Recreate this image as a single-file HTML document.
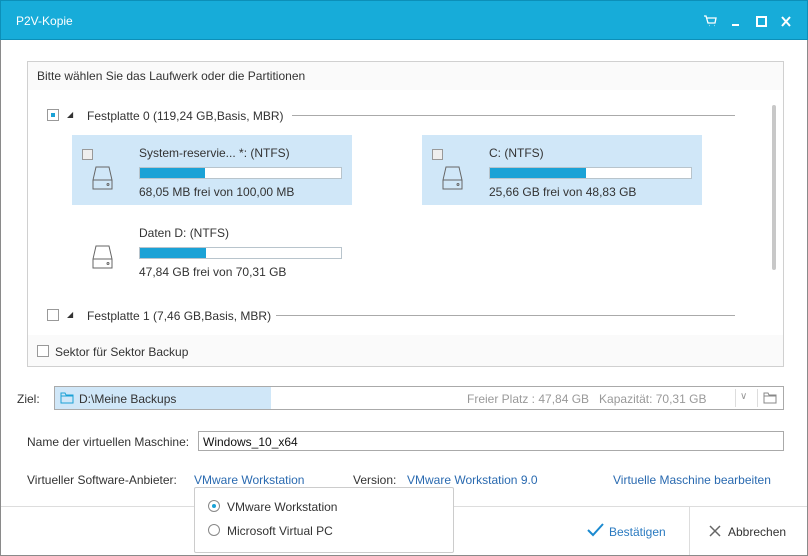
<!DOCTYPE html>
<html><head><meta charset="utf-8"><style>
*{box-sizing:border-box;margin:0;padding:0}
body{width:808px;height:556px;background:#fff;font-family:"Liberation Sans",sans-serif;font-size:12px;color:#333;position:relative;overflow:hidden;letter-spacing:0}
.a{position:absolute;white-space:nowrap}
.bar{position:absolute;height:12px;border:1px solid #b8c4cc;background:#fff}
.bar i{display:block;height:100%;background:#1ba2d6}
.card{position:absolute;background:#d0e7f8}
.cb{position:absolute;width:12px;height:12px;border:1px solid #999;background:#fff}
.lnk{color:#2a6ab0}
</style></head><body>
<div class="a" style="left:0;top:0;width:808px;height:40px;background:#17acd9;border:1px solid #0c8fb8"></div>
<div class="a" style="left:16px;top:14px;color:#fff;font-size:12px">P2V-Kopie</div>
<svg class="a" style="left:703px;top:14px" width="90" height="14"><g stroke="#fff" fill="none" stroke-width="1.3"><path d="M1 2h2l2 7h7l1-5H4M6 11.5h.5M11 11.5h.5"/></g><rect x="29" y="10" width="7" height="2" fill="#fff"/><rect x="54" y="3" width="9" height="9" fill="none" stroke="#fff" stroke-width="2"/><path d="M79 3l8 9M87 3l-8 9" stroke="#fff" stroke-width="2"/></svg>
<div class="a" style="left:0;top:40px;width:808px;height:516px;border:1px solid #8a8a8a;border-top:none"></div>
<div class="a" style="left:27px;top:61px;width:757px;height:306px;border:1px solid #d0d0d0;background:#fafafa"></div>
<div class="a" style="left:28px;top:90px;width:755px;height:245px;background:#fff"></div>
<div class="a" style="left:37px;top:69px">Bitte wählen Sie das Laufwerk oder die Partitionen</div>
<div class="a" style="left:772px;top:105px;width:4px;height:165px;background:#c8c8c8;border-radius:2px"></div>
<div class="cb" style="left:47px;top:109px"><i style="position:absolute;left:3px;top:3px;width:4px;height:4px;background:#1ba2d6"></i></div>
<div class="a" style="left:67px;top:110px;font-size:8px">◢</div>
<div class="a" style="left:87px;top:109px">Festplatte 0 (119,24 GB,Basis, MBR)</div>
<div class="a" style="left:292px;top:115px;width:443px;height:1px;background:#aaa"></div>
<div class="card" style="left:72px;top:135px;width:280px;height:70px"></div>
<div class="card" style="left:422px;top:135px;width:280px;height:70px"></div>
<div class="cb" style="left:82px;top:149px;width:11px;height:11px;background:#eee"></div>
<div class="cb" style="left:432px;top:149px;width:11px;height:11px;background:#eee"></div>
<svg class="a" style="left:91px;top:165px" width="24" height="28"><g fill="none" stroke="#666"><path d="M5 2h13l3 13v9H2v-9z M2 15h19"/><circle cx="17" cy="19.5" r="1"/></g></svg>
<svg class="a" style="left:441px;top:165px" width="24" height="28"><g fill="none" stroke="#666"><path d="M5 2h13l3 13v9H2v-9z M2 15h19"/><circle cx="17" cy="19.5" r="1"/></g></svg>
<svg class="a" style="left:91px;top:244px" width="24" height="28"><g fill="none" stroke="#666"><path d="M5 2h13l3 13v9H2v-9z M2 15h19"/><circle cx="17" cy="19.5" r="1"/></g></svg>
<div class="a" style="left:139px;top:146px">System-reservie... *: (NTFS)</div>
<div class="bar" style="left:139px;top:167px;width:203px"><i style="width:65px"></i></div>
<div class="a" style="left:139px;top:185px">68,05 MB frei von 100,00 MB</div>
<div class="a" style="left:489px;top:146px">C: (NTFS)</div>
<div class="bar" style="left:489px;top:167px;width:203px"><i style="width:96px"></i></div>
<div class="a" style="left:489px;top:185px">25,66 GB frei von 48,83 GB</div>
<div class="a" style="left:139px;top:226px">Daten D: (NTFS)</div>
<div class="bar" style="left:139px;top:247px;width:203px"><i style="width:66px"></i></div>
<div class="a" style="left:139px;top:265px">47,84 GB frei von 70,31 GB</div>
<div class="cb" style="left:47px;top:309px"></div>
<div class="a" style="left:67px;top:310px;font-size:8px">◢</div>
<div class="a" style="left:87px;top:309px">Festplatte 1 (7,46 GB,Basis, MBR)</div>
<div class="a" style="left:276px;top:315px;width:459px;height:1px;background:#aaa"></div>
<div class="cb" style="left:37px;top:345px"></div>
<div class="a" style="left:55px;top:345px">Sektor für Sektor Backup</div>
<div class="a" style="left:17px;top:392px">Ziel:</div>
<div class="a" style="left:54px;top:386px;width:730px;height:24px;border:1px solid #aaa"></div>
<div class="a" style="left:55px;top:387px;width:216px;height:22px;background:#d0e7f8"></div>
<svg class="a" style="left:60px;top:392px" width="14" height="12"><path d="M1 1h4l1 2h7v8H1z M1 4h12" fill="none" stroke="#1ba2d6"/></svg>
<div class="a" style="left:79px;top:392px">D:\Meine Backups</div>
<div class="a" style="left:467px;top:392px;color:#999">Freier Platz : 47,84 GB&nbsp;&nbsp;&nbsp;Kapazität: 70,31 GB</div>
<div class="a" style="left:735px;top:389px;width:1px;height:18px;background:#ddd"></div>
<div class="a" style="left:740px;top:391px;color:#999;font-size:10px">∨</div>
<div class="a" style="left:757px;top:389px;width:1px;height:18px;background:#ddd"></div>
<svg class="a" style="left:763px;top:392px" width="14" height="12"><path d="M1 1h4l1 2h7v8H1z M1 4h12" fill="none" stroke="#888"/></svg>
<div class="a" style="left:27px;top:435px">Name der virtuellen Maschine:</div>
<div class="a" style="left:198px;top:431px;width:586px;height:20px;border:1px solid #aaa"></div>
<div class="a" style="left:203px;top:435px;color:#111">Windows_10_x64</div>
<div class="a" style="left:27px;top:473px">Virtueller Software-Anbieter:</div>
<div class="a lnk" style="left:194px;top:473px">VMware Workstation</div>
<div class="a" style="left:353px;top:473px">Version:</div>
<div class="a lnk" style="left:407px;top:473px">VMware Workstation 9.0</div>
<div class="a lnk" style="left:613px;top:473px">Virtuelle Maschine bearbeiten</div>
<div class="a" style="left:1px;top:506px;width:806px;height:1px;background:#ddd"></div>
<div class="a" style="left:689px;top:507px;width:1px;height:48px;background:#ddd"></div>
<div class="a" style="left:194px;top:487px;width:260px;height:66px;background:#fff;border:1px solid #ccc;border-radius:2px"></div>
<div class="a" style="left:208px;top:500px;width:12px;height:12px;border:1px solid #888;border-radius:50%"><i style="position:absolute;left:3px;top:3px;width:4px;height:4px;border-radius:50%;background:#1ba2d6"></i></div>
<div class="a" style="left:227px;top:500px">VMware Workstation</div>
<div class="a" style="left:208px;top:524px;width:12px;height:12px;border:1px solid #888;border-radius:50%"></div>
<div class="a" style="left:227px;top:524px">Microsoft Virtual PC</div>
<svg class="a" style="left:587px;top:523px" width="18" height="14"><path d="M1 7l5 5L16 1" fill="none" stroke="#1b8ad0" stroke-width="2"/></svg>
<div class="a" style="left:609px;top:525px;color:#2a7ac0">Bestätigen</div>
<svg class="a" style="left:709px;top:525px" width="12" height="12"><path d="M1 1l10 10M11 1L1 11" stroke="#666" stroke-width="1.5"/></svg>
<div class="a" style="left:728px;top:525px">Abbrechen</div>
</body></html>
